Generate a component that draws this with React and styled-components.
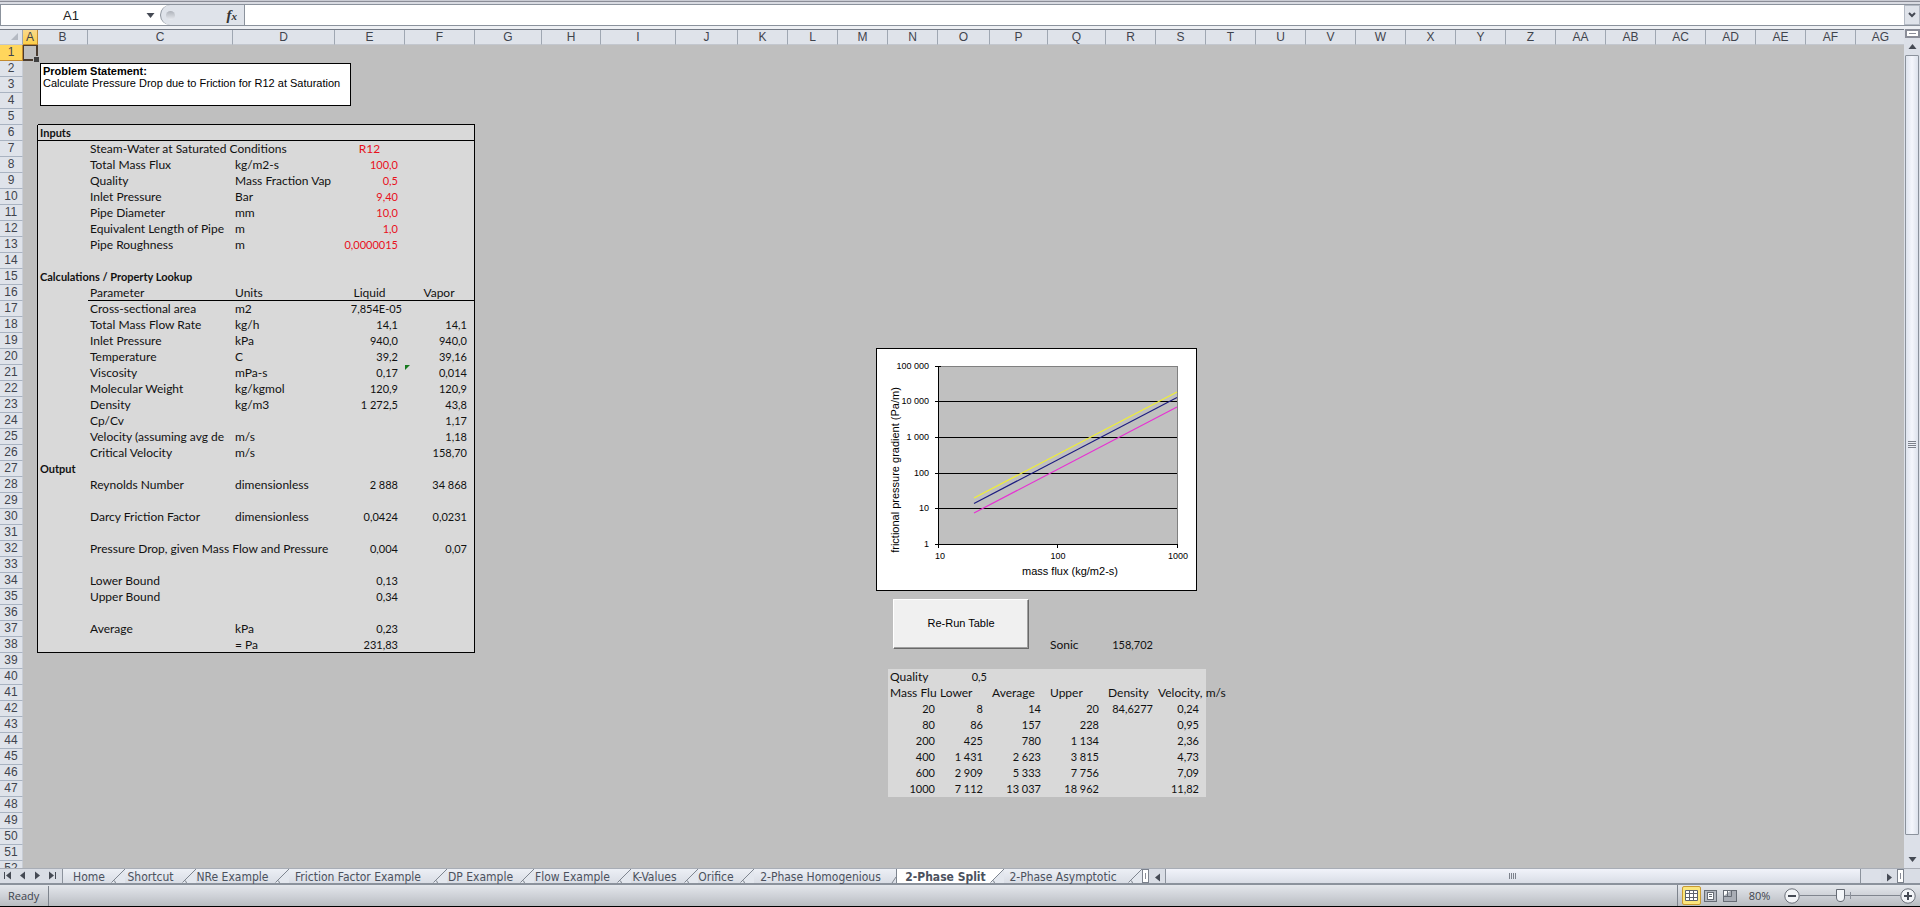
import styled, { createGlobalStyle, css } from 'styled-components';
import { useState } from 'react';

const GlobalStyle = createGlobalStyle`
    :root {
        --sheet: #bfbfbf;
        --panel: #d9d9d9;
        --header: #dfe3ea;
        --header-line: #9fa7b2;
        --ink: #3f444d;
        --line: #8b929c;
    }

    * {
        box-sizing: border-box;
    }

    body {
        margin: 0;
        background: var(--header);
        font-family: "Liberation Sans", Arial, sans-serif;
    }

    button, input {
        font-family: inherit;
        margin: 0;
        padding: 0;
        border: 0;
        background: none;
        outline: none;
    }

    svg {
        display: block;
    }
`

const Page = styled.div`
    height: 100vh;
    display: flex;
    flex-direction: column;
    overflow: hidden;
    border-bottom: 1px solid #000;
`

/* Formula bar */

const TopEdge = styled.div`
    height: 4px;
    flex-shrink: 0;
    background: linear-gradient(#c9cbd3 25%, #8a8c96 25% 50%, #d9dbe2 50%);
`

const FormulaBar = styled.div`
    height: 25px;
    flex-shrink: 0;
    display: flex;
    border-bottom: 3px solid #eef0f4;
    box-shadow: inset 0 1px 0 var(--line), inset 0 -1px 0 var(--line);
    background: #fff;
    padding: 1px 0;
`

const NameBox = styled.div`
    width: 160px;
    display: flex;
    align-items: center;
    border-left: 1px solid var(--line);

    input {
        width: 140px;
        font-size: 13px;
        text-align: center;
        color: #222;
    }

    button {
        width: 18px;
        height: 20px;
        display: flex;
        align-items: center;
        justify-content: center;
    }
`

const FunctionArea = styled.div`
    width: 85px;
    display: flex;
    align-items: center;
    justify-content: space-between;
    padding: 0 7px 0 5px;
    background: var(--header);
    border: 1px solid var(--line);
    border-width: 0 1px 0 1px;
    border-radius: 10px 0 0 10px;

    i {
        width: 9px;
        height: 9px;
        border-radius: 50%;
        background: linear-gradient(#aeb2ba, #e8ebf0);
    }

    button {
        font: italic bold 15px "Liberation Serif", serif;
        line-height: 18px;
        color: #333;
    }

    small {
        font-size: 11px;
    }
`

const FormulaInput = styled.input`
    flex: 1;
    min-width: 0;
    font-size: 13px;
`

const ExpandButton = styled.button`
    width: 16px;
    display: flex;
    align-items: center;
    justify-content: center;
    background: var(--header);
    border: 1px solid #b4bac4;
`

/* Sheet */

const Workspace = styled.div`
    flex: 1;
    min-height: 0;
    display: flex;
`

const Sheet = styled.div`
    flex: 1;
    min-width: 0;
    position: relative;
    overflow: hidden;
    background: var(--sheet);
`

const Grid = styled.table`
    table-layout: fixed;
    width: 0;
    border-spacing: 0;
    border-collapse: separate;
    border-top: 1px solid #747a85;
    font-size: 12px;

    tr {
        height: 16px;
    }

    thead tr {
        height: 15px;
    }
`

const ColHead = styled.th`
    padding: 0;
    height: 15px;
    line-height: 14px;
    font-weight: normal;
    color: var(--ink);
    background: ${p => p.$active ? 'linear-gradient(#f9d98b, #fdd04a)' : 'var(--header)'};
    border-right: 1px solid ${p => p.$active ? '#c28a30' : 'var(--header-line)'};
    border-bottom: 1px solid ${p => p.$active ? '#c28a30' : '#c3c7ce'};
`

const Corner = styled(ColHead)`
    svg {
        margin-left: 11px;
    }
`

const RowHead = styled.th`
    padding: 0;
    height: 16px;
    line-height: 15px;
    font-weight: normal;
    color: var(--ink);
    background: ${p => p.$active ? '#ffd65c' : 'var(--header)'};
    border-right: 1px solid ${p => p.$active ? '#c28a30' : '#c9ced6'};
    border-bottom: 1px solid ${p => p.$active ? '#c28a30' : '#a9b3c1'};
`

const Cell = styled.td`
    position: relative;
    height: 16px;
    padding: 0 ${p => p.$indent ? 7 : 3}px 0 2px;
    vertical-align: top;
    line-height: 15px;
    font-family: Lato, Carlito, sans-serif;
    font-size: 12px;
    font-weight: ${p => p.$bold ? 'bold' : 'normal'};
    white-space: nowrap;
    overflow: ${p => p.$spill ? 'visible' : 'hidden'};
    text-align: ${p => p.$align || 'left'};
    color: ${p => p.$red ? '#e8101c' : '#111'};
    background: ${p => p.$filled ? 'var(--panel)' : 'transparent'};

    ${p => (p.$bold || p.$align === 'right') && css`font-size: 11px;`}
    ${p => p.$lineRight && css`border-right: 1px solid #000;`}
    ${p => p.$lineBottom && css`border-bottom: 1px solid #000;`}
`

const Selection = styled.span`
    position: absolute;
    inset: 0;
    border: 1px solid #4a3c30;
    border-width: 1px 2px 2px 1px;

    &::after {
        content: "";
        position: absolute;
        right: -3px;
        bottom: -3px;
        width: 5px;
        height: 5px;
        background: #404040;
        border: 1px solid var(--sheet);
        border-width: 1px 0 0 1px;
    }
`

const ErrorMark = styled.span`
    position: absolute;
    top: 0;
    left: 0;
    border-top: 5px solid #177a1f;
    border-right: 5px solid transparent;
`

const Note = styled.div`
    position: absolute;
    top: 34px;
    left: 40px;
    width: 311px;
    height: 43px;
    padding: 1px 2px;
    background: #fff;
    border: 1px solid #000;
    font-size: 11px;
    line-height: 12px;
    white-space: nowrap;

    strong, span {
        display: block;
    }
`

const ChartFrame = styled.div`
    position: absolute;
    top: 319px;
    left: 876px;
    width: 321px;
    height: 243px;
    background: #fff;
    border: 1px solid #000;

    svg {
        margin: -1px;
    }
`

const RunButton = styled.button`
    position: absolute;
    top: 570px;
    left: 893px;
    width: 136px;
    height: 50px;
    padding-bottom: 2px;
    font-size: 11px;
    color: #000;
    background: #f0f0f0;
    border: 1px solid #fff;
    border-right-color: #696969;
    border-bottom-color: #696969;
    box-shadow: inset -1px -1px 0 #a0a0a0;
`

/* Scroll bars and sheet tabs */

const VerticalScroll = styled.div`
    width: 16px;
    display: flex;
    flex-direction: column;
    align-items: center;
    background: #dce0e8;
`

const SplitBox = styled.div`
    width: 15px;
    height: 9px;
    flex-shrink: 0;
    background: #fff;
    border: 2px solid #8a8d98;
    padding: 2px 2px;

    &::after {
        content: "";
        display: block;
        border-top: 1px solid #8a8d98;
    }
`

const ArrowButton = styled.button`
    width: 16px;
    height: 17px;
    flex-shrink: 0;
    display: flex;
    align-items: center;
    justify-content: center;
`

const VerticalThumb = styled.div`
    flex: 1;
    width: 14px;
    margin-bottom: 16px;
    display: flex;
    align-items: center;
    justify-content: center;
    background: linear-gradient(90deg, #dfe4ee, #f4f6fc 50%, #dde2ec);
    border: 1px solid var(--line);
    border-radius: 1px;
`

const TabBar = styled.div`
    height: 17px;
    flex-shrink: 0;
    display: flex;
    background: #d9dde5;
    border-top: 1px solid #a8adb6;
    border-bottom: 2px solid #8b929c;
`

const TabNav = styled.div`
    width: 62px;
    display: flex;
    align-items: center;
    justify-content: space-between;
    padding: 0 6px 2px 4px;
`

const Tabs = styled.div`
    display: flex;
    border-left: 1px solid var(--line);
`

const Tab = styled.button`
    position: relative;
    width: ${p => p.$width}px;
    height: 14px;
    padding-right: ${p => p.$wide ? 10 : 20}px;
    font-family: "DejaVu Sans Condensed", "DejaVu Sans", sans-serif;
    font-size: 12px;
    line-height: 16px;
    white-space: nowrap;
    color: #4b515d;
    background: linear-gradient(#eceff5, #d9dde5);

    ${p => p.$active && css`
        font-weight: bold;
        background: #fff;
    `}

    svg {
        position: absolute;
        top: 0;
        right: 0;
    }
`

const Handle = styled.div`
    width: 7px;
    height: 14px;
    flex-shrink: 0;
    background: #fff;
    border: 1px solid #7c828d;
    padding: 3px 2px;

    &::after {
        content: "";
        display: block;
        height: 6px;
        border-left: 1px solid #8a8d98;
    }
`

const HorizontalTrack = styled.div`
    flex: 1;
    display: flex;
    padding-right: 20px;
    background: #dce0e8;
`

const HorizontalThumb = styled.div`
    flex: 1;
    display: flex;
    align-items: center;
    justify-content: center;
    background: linear-gradient(#f1f3fa, #d9dde6);
    border: 1px solid var(--line);
    border-width: 0 1px;
`

/* Status bar */

const StatusBar = styled.footer`
    height: 21px;
    flex-shrink: 0;
    display: flex;
    align-items: center;
    background: linear-gradient(#e4e7ec, #cbced4 60%, #b8bdc0);
    font-family: "Open Sans", sans-serif;
    font-size: 11px;
    color: var(--ink);
`

const Ready = styled.div`
    width: 49px;
    padding-left: 8px;
    line-height: 20px;
    border-right: 1px solid #7d838c;
`

const StatusTools = styled.div`
    margin-left: auto;
    height: 21px;
    padding: 0 4px;
    display: flex;
    align-items: center;
    border-left: 1px solid #7d838c;
`

const ViewButton = styled.button`
    width: 19px;
    height: 19px;
    display: flex;
    align-items: center;
    justify-content: center;
    border-radius: 2px;

    ${p => p.$active && css`
        background: #fbe67c;
        border: 1px solid #c99a32;
    `}
`

const Zoom = styled.div`
    display: flex;
    align-items: center;

    label {
        width: 45px;
        padding-right: 4px;
        text-align: center;
    }
`

const Slider = styled.input`
    width: 100px;
    height: 16px;
    appearance: none;
    background:
        linear-gradient(#8b9099, #8b9099) center / 1px 7px no-repeat,
        linear-gradient(#80858e, #80858e) center / 100% 1px no-repeat;

    &::-webkit-slider-thumb {
        appearance: none;
        width: 9px;
        height: 13px;
        background: #f4f6f9;
        border: 1px solid #666b74;
        border-radius: 1px 1px 5px 5px;
    }
`

const WIDTHS = {
    A: 15, B: 50, C: 145, D: 102, E: 70, F: 70, G: 67, H: 59, I: 75, J: 62,
    O: 52, P: 58, Q: 58,
};

const COLUMNS = [
    ...'ABCDEFGHIJKLMNOPQRSTUVWXYZ',
    'AA', 'AB', 'AC', 'AD', 'AE', 'AF', 'AG',
];

const ROWS = Array.from({ length: 52 }, (_, i) => i + 1);

const bold = (text, span = 1) => ({ text, span, bold: true });
const label = (text, span = 1) => ({ text, span });
const center = (text) => ({ text, align: 'center' });
const num = (text) => ({ text, align: 'right', indent: true });
const flush = (text) => ({ text, align: 'right' });
const input = (text) => ({ ...num(text), red: true });

const CELLS = {
    B6: bold('Inputs'),
    C7: label('Steam-Water at Saturated Conditions', 2), E7: { ...center('R12'), red: true },
    C8: label('Total Mass Flux'), D8: label('kg/m2-s'), E8: input('100,0'),
    C9: label('Quality'), D9: label('Mass Fraction Vap'), E9: input('0,5'),
    C10: label('Inlet Pressure'), D10: label('Bar'), E10: input('9,40'),
    C11: label('Pipe Diameter'), D11: label('mm'), E11: input('10,0'),
    C12: label('Equivalent Length of Pipe'), D12: label('m'), E12: input('1,0'),
    C13: label('Pipe Roughness'), D13: label('m'), E13: input('0,0000015'),

    B15: bold('Calculations / Property Lookup', 2),
    C16: label('Parameter'), D16: label('Units'), E16: center('Liquid'), F16: center('Vapor'),
    C17: label('Cross-sectional area'), D17: label('m2'), E17: flush('7,854E-05'),
    C18: label('Total Mass Flow Rate'), D18: label('kg/h'), E18: num('14,1'), F18: num('14,1'),
    C19: label('Inlet Pressure'), D19: label('kPa'), E19: num('940,0'), F19: num('940,0'),
    C20: label('Temperature'), D20: label('C'), E20: num('39,2'), F20: num('39,16'),
    C21: label('Viscosity'), D21: label('mPa-s'), E21: num('0,17'), F21: { ...num('0,014'), error: true },
    C22: label('Molecular Weight'), D22: label('kg/kgmol'), E22: num('120,9'), F22: num('120,9'),
    C23: label('Density'), D23: label('kg/m3'), E23: num('1 272,5'), F23: num('43,8'),
    C24: label('Cp/Cv'), F24: num('1,17'),
    C25: label('Velocity (assuming avg de'), D25: label('m/s'), F25: num('1,18'),
    C26: label('Critical Velocity'), D26: label('m/s'), F26: num('158,70'),

    B27: bold('Output'),
    C28: label('Reynolds Number'), D28: label('dimensionless'), E28: num('2 888'), F28: num('34 868'),
    C30: label('Darcy Friction Factor'), D30: label('dimensionless'), E30: num('0,0424'), F30: num('0,0231'),
    C32: label('Pressure Drop, given Mass Flow and Pressure', 2), E32: num('0,004'), F32: num('0,07'),
    C34: label('Lower Bound'), E34: num('0,13'),
    C35: label('Upper Bound'), E35: num('0,34'),
    C37: label('Average'), D37: label('kPa'), E37: num('0,23'),
    D38: label('= Pa'), E38: num('231,83'),

    Q38: label('Sonic'), R38: flush('158,702'),
    N40: label('Quality'), O40: flush('0,5'),
    N41: label('Mass Flu'), O41: label('Lower'), P41: label('Average'), Q41: label('Upper'),
    R41: label('Density'), S41: { ...label('Velocity, m/s'), spill: true },
    R42: flush('84,6277'),
};

const RESULTS = [
    ['20', '8', '14', '20', '0,24'],
    ['80', '86', '157', '228', '0,95'],
    ['200', '425', '780', '1 134', '2,36'],
    ['400', '1 431', '2 623', '3 815', '4,73'],
    ['600', '2 909', '5 333', '7 756', '7,09'],
    ['1000', '7 112', '13 037', '18 962', '11,82'],
];

RESULTS.forEach((row, i) => {
    CELLS[`N${42 + i}`] = flush(row[0]);
    ['O', 'P', 'Q', 'S'].forEach((col, j) => {
        CELLS[`${col}${42 + i}`] = num(row[j + 1]);
    });
});

const TABS = [
    { name: 'Home', width: 62, wide: true },
    { name: 'Shortcut', width: 71 },
    { name: 'NRe Example', width: 93 },
    { name: 'Friction Factor Example', width: 158 },
    { name: 'DP Example', width: 87 },
    { name: 'Flow Example', width: 97 },
    { name: 'K-Values', width: 67 },
    { name: 'Orifice', width: 56 },
    { name: '2-Phase Homogenious', width: 143, wide: true },
    { name: '2-Phase Split', width: 107, wide: true },
    { name: '2-Phase Asymptotic', width: 138 },
];

function Arrow({ dir, bar }) {
    const turn = { up: 0, right: 90, down: 180, left: 270 }[dir];

    return (
        <svg width="9" height="9" viewBox="0 0 9 9" fill="#454a54">
            <path d="M4.5 2 L8.5 7 H0.5 Z" transform={`rotate(${turn} 4.5 4.5)`} />
            {bar && <rect x={bar === 'left' ? 0 : 8} y="1" width="1" height="7" />}
        </svg>
    )
}

function SheetCell({ col, row }) {
    const cell = CELLS[col + row] || {};
    const start = COLUMNS.indexOf(col);
    const end = start + (cell.span || 1) - 1;

    const inPanel = start >= 1 && start <= 5 && row >= 6 && row <= 38;
    const inTable = start >= 13 && start <= 18 && row >= 40 && row <= 47;
    const lineBottom = (start >= 1 && start <= 5 && [5, 6, 38].includes(row))
        || (start >= 2 && start <= 5 && row === 16);
    const lineRight = row >= 6 && row <= 38 && (end === 0 || end === 5);

    return (
        <Cell
            colSpan={cell.span || 1}
            $align={cell.align}
            $bold={cell.bold}
            $red={cell.red}
            $indent={cell.indent}
            $spill={cell.spill || col + row === 'A1'}
            $filled={inPanel || inTable}
            $lineBottom={lineBottom}
            $lineRight={lineRight}
        >
            {cell.error && <ErrorMark />}
            {col + row === 'A1' && <Selection />}
            {cell.text}
        </Cell>
    )
}

function SheetRow({ row }) {
    let covered = 0;

    return (
        <tr>
            <RowHead $active={row === 1}>{row}</RowHead>
            {COLUMNS.map(col => {
                if (covered > 0) {
                    covered -= 1;
                    return null;
                }
                covered = ((CELLS[col + row] || {}).span || 1) - 1;
                return <SheetCell key={col} col={col} row={row} />
            })}
        </tr>
    )
}

function Chart() {
    const grid = [53, 89, 125, 160];
    const ticks = ['100 000', '10 000', '1 000', '100', '10', '1'];
    const tickY = [18, 53, 89, 125, 160, 196];

    return (
        <ChartFrame>
            <svg width="321" height="243" viewBox="0 0 321 243" fontSize="9" fontFamily="Liberation Sans, Arial, sans-serif">
                <rect x="62.5" y="18.5" width="239" height="178" fill="#c0c0c0" stroke="#808080" />
                <g stroke="#000" shapeRendering="crispEdges">
                    {grid.map(y => <line key={y} x1="62" x2="301" y1={y + 0.5} y2={y + 0.5} />)}
                    {tickY.map(y => <line key={y} x1="59" x2="65" y1={y + 0.5} y2={y + 0.5} />)}
                    <path d="M62.5 18 V200 M62 196.5 H302 M181.5 197 V200 M301.5 197 V200" />
                </g>
                <g strokeWidth="1.2">
                    <line x1="98" y1="150" x2="301" y2="44" stroke="#f0f032" />
                    <line x1="98" y1="155.5" x2="301" y2="49.5" stroke="#1c1c80" />
                    <line x1="98" y1="165" x2="301" y2="59" stroke="#e632d2" />
                </g>
                {ticks.map((t, i) => <text key={t} x="53" y={tickY[i] + 3} textAnchor="end">{t}</text>)}
                <text x="64" y="211" textAnchor="middle">10</text>
                <text x="182" y="211" textAnchor="middle">100</text>
                <text x="302" y="211" textAnchor="middle">1000</text>
                <text x="194" y="227" textAnchor="middle" fontSize="11">mass flux (kg/m2-s)</text>
                <text x="23" y="122" textAnchor="middle" fontSize="11" transform="rotate(-90 23 122)">frictional pressure gradient (Pa/m)</text>
            </svg>
        </ChartFrame>
    )
}

function SheetTabs() {
    const [current, setCurrent] = useState('2-Phase Split');

    return (
        <Tabs>
            {TABS.map(({ name, width, wide }, i) => (
                <Tab
                    key={name}
                    $width={width}
                    $wide={wide}
                    $active={name === current}
                    onClick={() => setCurrent(name)}
                >
                    {name}
                    {TABS[i + 1]?.name === current ? (
                        <svg width="14" height="14" viewBox="0 0 14 14" fill="none" stroke="#7e858f">
                            <path d="M13.5 0 V14 M13 8 L9 14" />
                        </svg>
                    ) : (
                        <svg width="14" height="14" viewBox="0 0 14 14" fill="none" stroke="#7e858f">
                            <path d="M14 0 L0 14 H14 Z" fill="#e3e7ee" stroke="none" />
                            <path d="M14 0 L0.5 13.5 M2.5 11.5 Q4 11.5 4.5 14" />
                        </svg>
                    )}
                </Tab>
            ))}
        </Tabs>
    )
}

function ZoomButton({ sign }) {
    return (
        <button aria-label={sign === 'plus' ? 'Zoom in' : 'Zoom out'}>
            <svg width="16" height="16" viewBox="0 0 16 16" fill="#f2f4f7" stroke="#6b7079">
                <circle cx="8" cy="8" r="7.2" />
                <path d={sign === 'plus' ? 'M4 8 H12 M8 4 V12' : 'M4 8 H12'} stroke="#454a54" strokeWidth="2" />
            </svg>
        </button>
    )
}

export default function App() {
    const [zoom, setZoom] = useState(40);

    return (
        <Page>
            <GlobalStyle />

            <TopEdge />

            <FormulaBar>
                <NameBox>
                    <input aria-label="Name box" defaultValue="A1" />
                    <button aria-label="Names"> <Arrow dir="down" /> </button>
                </NameBox>
                <FunctionArea>
                    <i />
                    <button aria-label="Insert function">f<small>x</small></button>
                </FunctionArea>
                <FormulaInput aria-label="Formula" />
                <ExpandButton aria-label="Expand formula bar">
                    <svg width="8" height="6" viewBox="0 0 8 6" fill="none" stroke="#454a54" strokeWidth="2">
                        <path d="M1 1 L4 4 L7 1" />
                    </svg>
                </ExpandButton>
            </FormulaBar>

            <Workspace>
                <Sheet>
                    <Grid>
                        <colgroup>
                            <col style={{ width: 23 }} />
                            {COLUMNS.map(col => <col key={col} style={{ width: WIDTHS[col] || 50 }} />)}
                        </colgroup>
                        <thead>
                            <tr>
                                <Corner>
                                    <svg width="8" height="8" viewBox="0 0 8 8"> <path d="M7 0 V7 H0 Z" fill="#b4b9c2" /> </svg>
                                </Corner>
                                {COLUMNS.map(col => <ColHead key={col} $active={col === 'A'}>{col}</ColHead>)}
                            </tr>
                        </thead>
                        <tbody>
                            {ROWS.map(row => <SheetRow key={row} row={row} />)}
                        </tbody>
                    </Grid>

                    <Note>
                        <strong>Problem Statement:</strong>
                        <span>Calculate Pressure Drop due to Friction for R12 at Saturation</span>
                    </Note>

                    <Chart />

                    <RunButton>Re-Run Table</RunButton>
                </Sheet>

                <VerticalScroll>
                    <SplitBox />
                    <ArrowButton aria-label="Scroll up"> <Arrow dir="up" /> </ArrowButton>
                    <VerticalThumb>
                        <svg width="8" height="8" viewBox="0 0 8 8" stroke="#7c818b">
                            <path d="M0 0.5 H8 M0 2.5 H8 M0 4.5 H8 M0 6.5 H8" />
                        </svg>
                    </VerticalThumb>
                    <ArrowButton aria-label="Scroll down"> <Arrow dir="down" /> </ArrowButton>
                </VerticalScroll>
            </Workspace>

            <TabBar>
                <TabNav>
                    <button aria-label="First sheet"> <Arrow dir="left" bar="left" /> </button>
                    <button aria-label="Previous sheet"> <Arrow dir="left" /> </button>
                    <button aria-label="Next sheet"> <Arrow dir="right" /> </button>
                    <button aria-label="Last sheet"> <Arrow dir="right" bar="right" /> </button>
                </TabNav>
                <SheetTabs />
                <Handle />
                <ArrowButton aria-label="Scroll left"> <Arrow dir="left" /> </ArrowButton>
                <HorizontalTrack>
                    <HorizontalThumb>
                        <svg width="8" height="6" viewBox="0 0 8 6" stroke="#7c818b">
                            <path d="M0.5 0 V6 M2.5 0 V6 M4.5 0 V6 M6.5 0 V6" />
                        </svg>
                    </HorizontalThumb>
                </HorizontalTrack>
                <ArrowButton aria-label="Scroll right"> <Arrow dir="right" /> </ArrowButton>
                <Handle />
                <ArrowButton as="span" />
            </TabBar>

            <StatusBar>
                <Ready>Ready</Ready>
                <StatusTools>
                    <ViewButton $active aria-label="Normal view">
                        <svg width="13" height="11" viewBox="0 0 13 11" fill="#fff" stroke="#5d626c">
                            <path d="M0.5 0.5 H12.5 V10.5 H0.5 Z M0.5 3.5 H12.5 M0.5 7.5 H12.5 M4.5 0.5 V10.5 M8.5 0.5 V10.5" />
                        </svg>
                    </ViewButton>
                    <ViewButton aria-label="Page layout">
                        <svg width="13" height="12" viewBox="0 0 13 12" fill="#b4b8c0" stroke="#666b74">
                            <rect x="0.5" y="0.5" width="12" height="11" />
                            <rect x="3.5" y="2.5" width="6" height="7" fill="#fff" />
                            <path d="M5 4.5 H8 M5 6.5 H8" />
                        </svg>
                    </ViewButton>
                    <ViewButton aria-label="Page break preview">
                        <svg width="14" height="12" viewBox="0 0 14 12" fill="#a9adb5" stroke="#666b74">
                            <rect x="0.5" y="0.5" width="13" height="11" />
                            <path d="M1 1 H4 V6 H1 Z M5 1 H8 V6 H5 Z" fill="#fff" stroke="none" />
                            <path d="M4.5 0 V6.5 M8.5 0 V6.5 H0" />
                        </svg>
                    </ViewButton>
                    <Zoom>
                        <label htmlFor="zoom">80%</label>
                        <ZoomButton sign="minus" />
                        <Slider id="zoom" type="range" min="0" max="100" value={zoom} onChange={e => setZoom(Number(e.target.value))} />
                        <ZoomButton sign="plus" />
                    </Zoom>
                </StatusTools>
            </StatusBar>
        </Page>
    )
}
